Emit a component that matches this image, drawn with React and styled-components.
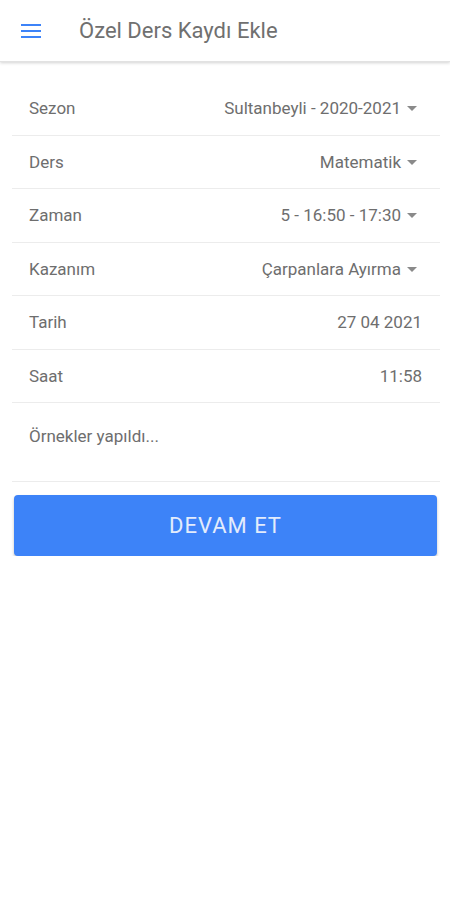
import React from "react";
import styled, { createGlobalStyle } from "styled-components";

const GlobalStyle = createGlobalStyle`
  body {
    margin: 0;
    background: #ffffff;
    font-family: Roboto, "Noto Sans", sans-serif;
  }
`;

const Header = styled.header`
  height: 62px;
  display: flex;
  align-items: center;
  padding: 0 0 0 20px;
  background: #fff;
  box-shadow: 0 1px 3px rgba(0, 0, 0, 0.18);
  border-bottom: 1px solid #e2e2e2;
  box-sizing: border-box;
`;

const MenuButton = styled.button`
  border: none;
  background: none;
  padding: 0;
  width: 22px;
  height: 22px;
  display: flex;
  align-items: center;
  justify-content: center;
  margin-right: 37px;
`;

const Title = styled.h1`
  margin: 0;
  font-size: 22px;
  font-weight: 400;
  color: #707070;
`;

const Form = styled.div`
  padding: 20px 10px 0 12px;
`;

const Row = styled.div`
  height: 53.5px;
  display: flex;
  align-items: center;
  justify-content: space-between;
  padding: 0 18px 0 17px;
  border-bottom: 1px solid #ececec;
  box-sizing: border-box;
  font-size: 17px;
  color: #6e6e6e;
`;

const Label = styled.span``;

const Value = styled.span`
  display: flex;
  align-items: center;
  gap: 6px;
`;

const Caret = styled.span`
  width: 0;
  height: 0;
  border-left: 5px solid transparent;
  border-right: 5px solid transparent;
  border-top: 5px solid #8a8a8a;
  margin: 1px 5px 0 0;
`;

const Note = styled.div`
  height: 79px;
  padding: 23px 17px 0;
  box-sizing: border-box;
  border-bottom: 1px solid #ececec;
  font-size: 17px;
  color: #6e6e6e;
`;

const SubmitButton = styled.button`
  display: block;
  width: 423px;
  height: 61px;
  margin: 13px 0 0 14px;
  border: none;
  border-radius: 4px;
  background: #3d83f8;
  color: #e3ecfc;
  font-family: Roboto, "Noto Sans", sans-serif;
  font-size: 22px;
  letter-spacing: 1px;
  box-shadow: 0 2px 3px rgba(0, 0, 0, 0.25);
`;

const rows = [
  { label: "Sezon", value: "Sultanbeyli - 2020-2021", select: true },
  { label: "Ders", value: "Matematik", select: true },
  { label: "Zaman", value: "5 - 16:50 - 17:30", select: true },
  { label: "Kazanım", value: "Çarpanlara Ayırma", select: true },
  { label: "Tarih", value: "27 04 2021" },
  { label: "Saat", value: "11:58" },
];

export default function App() {
  return (
    <>
      <GlobalStyle />
      <Header>
        <MenuButton aria-label="menu">
          <svg width="20" height="14" viewBox="0 0 20 14">
            <rect y="0" width="20" height="2" fill="#3d83f8" />
            <rect y="6" width="20" height="2" fill="#3d83f8" />
            <rect y="12" width="20" height="2" fill="#3d83f8" />
          </svg>
        </MenuButton>
        <Title>Özel Ders Kaydı Ekle</Title>
      </Header>
      <Form>
        {rows.map((r) => (
          <Row key={r.label}>
            <Label>{r.label}</Label>
            <Value>
              {r.value}
              {r.select && <Caret />}
            </Value>
          </Row>
        ))}
        <Note>Örnekler yapıldı...</Note>
      </Form>
      <SubmitButton>DEVAM ET</SubmitButton>
    </>
  );
}
